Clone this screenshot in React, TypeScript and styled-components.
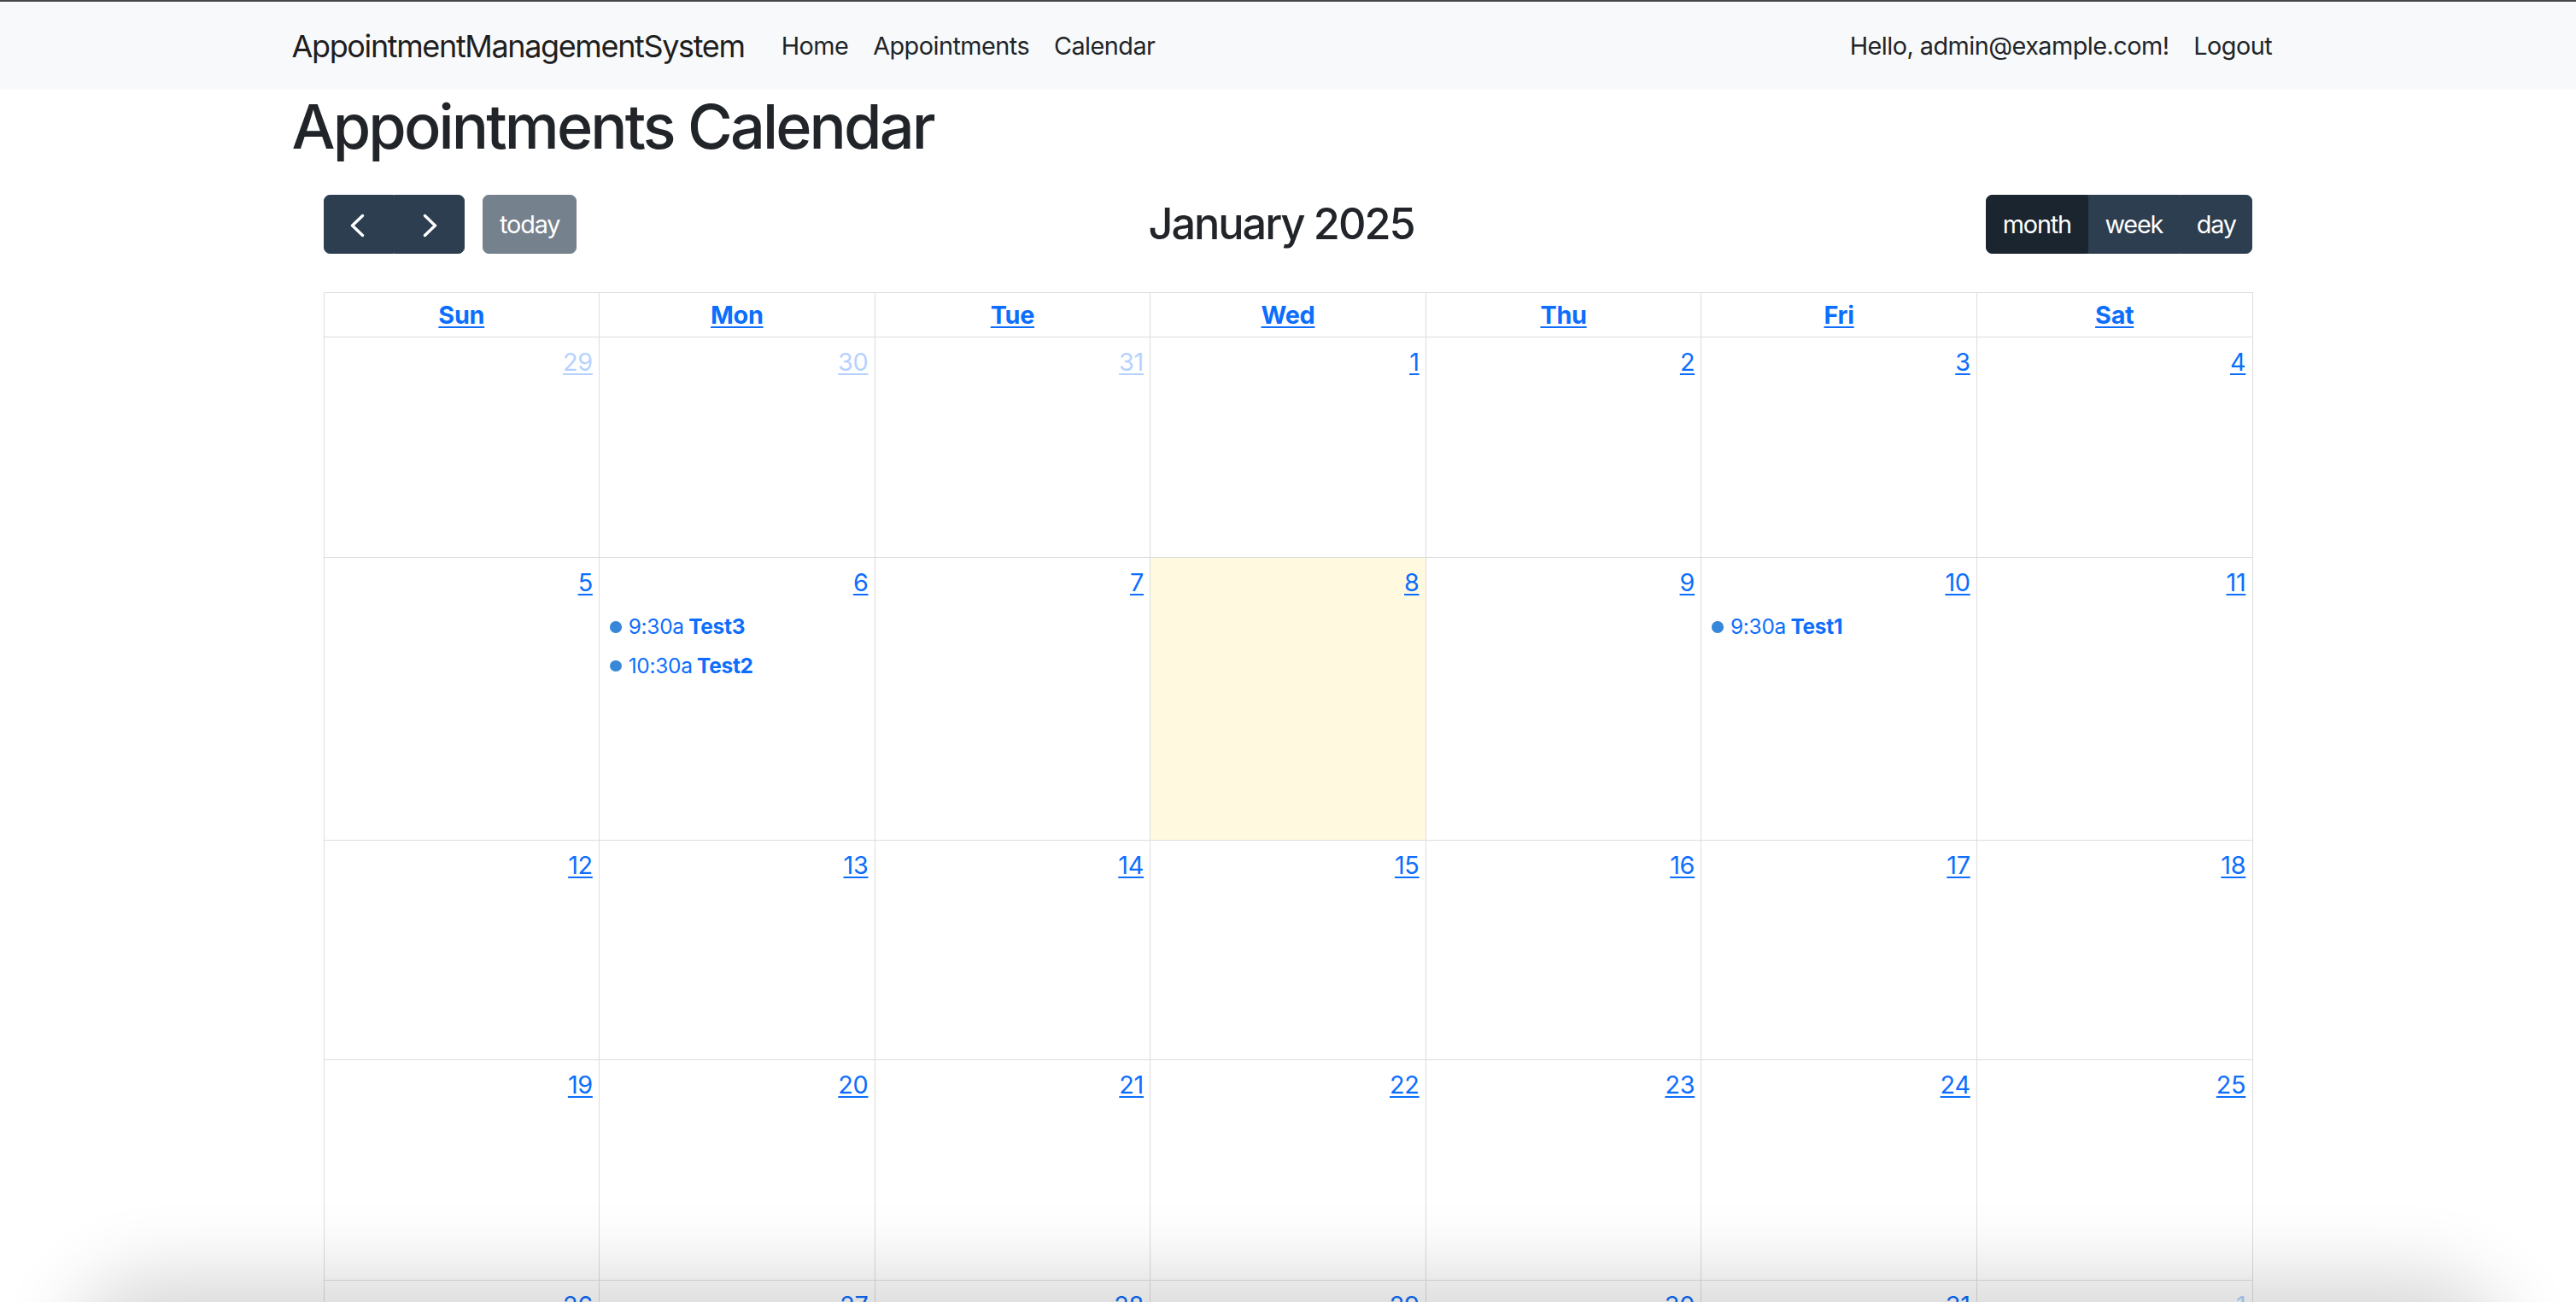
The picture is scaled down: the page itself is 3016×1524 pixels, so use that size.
import React from "react";
import styled, { createGlobalStyle } from "styled-components";

const GlobalStyle = createGlobalStyle`
  html, body { margin: 0; padding: 0; background: #fff; }
  body {
    font-family: Inter, "Noto Sans", "Liberation Sans", sans-serif;
    font-size: 28.8px;
    line-height: 1.5;
    color: #212529;
    letter-spacing: -0.01em;
  }
  * { box-sizing: border-box; }
`;

const WindowEdge = styled.div`
  height: 2px;
  background: #464646;
`;

const NavBar = styled.nav`
  background: #f8f9fa;
  padding: 15.5px 0;
`;

const Container = styled.div`
  width: 2333px;
  margin: 0 auto;
`;

const NavInner = styled(Container)`
  display: flex;
  align-items: center;
`;

const Brand = styled.a`
  font-size: 36px;
  line-height: 1.5;
  letter-spacing: -0.038em;
  padding: 9px 0;
  margin-right: 28.8px;
  color: rgba(0, 0, 0, 0.9);
  text-decoration: none;
`;

const NavList = styled.div<{ $end?: boolean }>`
  display: flex;
  align-items: center;
  margin-left: ${(p) => (p.$end ? "auto" : "0")};
`;

const NavLink = styled.a`
  padding: 14.4px;
  font-size: 28.8px;
  line-height: 1.5;
  letter-spacing: -0.018em;
  color: #212529;
  text-decoration: none;
`;

const Title = styled.h1`
  font-size: 72px;
  font-weight: 500;
  line-height: 1.2;
  letter-spacing: -0.04em;
  margin: 0 0 14.4px;
  color: #212529;
`;

const CalendarWrap = styled.div`
  padding: 22px 37px;
`;

const Toolbar = styled.div`
  display: flex;
  justify-content: space-between;
  align-items: center;
  margin-bottom: 45px;
`;

const Chunk = styled.div`
  display: flex;
  align-items: center;
`;

const ButtonGroup = styled.div`
  display: inline-flex;
  & > button { border-radius: 0; }
  & > button:first-child { border-radius: 7.2px 0 0 7.2px; }
  & > button:last-child { border-radius: 0 7.2px 7.2px 0; }
`;

const FcButton = styled.button<{ $active?: boolean; $disabled?: boolean; $gap?: boolean }>`
  display: inline-flex;
  align-items: center;
  justify-content: center;
  font-family: inherit;
  font-size: 28.8px;
  line-height: 1.5;
  letter-spacing: -0.04em;
  padding: 12.1px 18.72px;
  color: #fff;
  background: ${(p) => (p.$active ? "#1a252f" : "#2c3e50")};
  border: 1.8px solid ${(p) => (p.$active ? "#1a252f" : "#2c3e50")};
  border-radius: 7.2px;
  opacity: ${(p) => (p.$disabled ? 0.65 : 1)};
  margin-left: ${(p) => (p.$gap ? "21.6px" : "0")};
  cursor: pointer;
`;

const ToolbarTitle = styled.h2`
  margin: 0;
  font-size: 50.4px;
  font-weight: 500;
  line-height: 1.2;
  letter-spacing: -0.04em;
  color: #212529;
`;

const Grid = styled.div`
  display: grid;
  grid-template-columns: repeat(7, 1fr);
  border-top: 1.8px solid #ddd;
  border-left: 1.8px solid #ddd;
`;

const HeadCell = styled.div`
  border-right: 1.8px solid #ddd;
  border-bottom: 1.8px solid #ddd;
  padding: 3.6px;
  text-align: center;
  font-weight: 700;
`;

const LinkText = styled.a`
  color: #0d6efd;
  text-decoration: underline;
  text-underline-offset: 3px;
`;

const DayCell = styled.div<{ $h: number; $today?: boolean }>`
  height: ${(p) => p.$h}px;
  border-right: 1.8px solid #ddd;
  border-bottom: 1.8px solid #ddd;
  background: ${(p) => (p.$today ? "rgba(255, 220, 40, 0.15)" : "transparent")};
  display: flex;
  flex-direction: column;
`;

const DayTop = styled.div<{ $other?: boolean }>`
  display: flex;
  justify-content: flex-end;
  opacity: ${(p) => (p.$other ? 0.3 : 1)};
`;

const DayNumber = styled(LinkText)`
  padding: 7.2px;
  line-height: 1.5;
`;

const Events = styled.div`
  margin: 0 3.6px;
`;

const EventRow = styled.a`
  display: flex;
  align-items: center;
  margin-top: 1.8px;
  padding: 3.6px 0;
  font-size: 24.48px;
  line-height: 1.5;
  color: #0d6efd;
  text-decoration: none;
  white-space: nowrap;
`;

const EventDot = styled.span`
  width: 13.5px;
  height: 13.5px;
  border-radius: 50%;
  background: #3788d8;
  margin: 0 8px 0 8.5px;
  flex: none;
`;

const EventTime = styled.span`
  margin-right: 5.4px;
`;

const EventTitle = styled.span`
  font-weight: 700;
`;

const BottomShadow = styled.div`
  position: fixed;
  left: 110px;
  right: 110px;
  bottom: -140px;
  height: 140px;
  border-radius: 70px;
  background: rgba(0, 0, 0, 0.2);
  box-shadow: 0 0 90px 30px rgba(0, 0, 0, 0.16);
  pointer-events: none;
`;

const Chevron = ({ dir }: { dir: "left" | "right" }) => (
  <svg width="43.2" height="43.2" viewBox="0 0 43.2 43.2" aria-hidden>
    <polyline
      points={dir === "left" ? "26.5,11.5 14.5,23 26.5,34.5" : "16.5,11.5 28.5,23 16.5,34.5"}
      fill="none"
      stroke="#fff"
      strokeWidth="3.4"
      strokeLinecap="round"
      strokeLinejoin="round"
    />
  </svg>
);

type Ev = { time: string; title: string };
type Day = { n: number; other?: boolean; today?: boolean; events?: Ev[] };

const weeks: { h: number; days: Day[] }[] = [
  { h: 258, days: [{ n: 29, other: true }, { n: 30, other: true }, { n: 31, other: true }, { n: 1 }, { n: 2 }, { n: 3 }, { n: 4 }] },
  {
    h: 331,
    days: [
      { n: 5 },
      { n: 6, events: [{ time: "9:30a", title: "Test3" }, { time: "10:30a", title: "Test2" }] },
      { n: 7 },
      { n: 8, today: true },
      { n: 9 },
      { n: 10, events: [{ time: "9:30a", title: "Test1" }] },
      { n: 11 },
    ],
  },
  { h: 257, days: [12, 13, 14, 15, 16, 17, 18].map((n) => ({ n })) },
  { h: 258, days: [19, 20, 21, 22, 23, 24, 25].map((n) => ({ n })) },
  { h: 258, days: [{ n: 26 }, { n: 27 }, { n: 28 }, { n: 29 }, { n: 30 }, { n: 31 }, { n: 1, other: true }] },
];

const dayNames = ["Sun", "Mon", "Tue", "Wed", "Thu", "Fri", "Sat"];

export default function App() {
  return (
    <>
      <GlobalStyle />
      <WindowEdge />
      <NavBar>
        <NavInner>
          <Brand href="#">AppointmentManagementSystem</Brand>
          <NavList>
            <NavLink href="#">Home</NavLink>
            <NavLink href="#">Appointments</NavLink>
            <NavLink href="#">Calendar</NavLink>
          </NavList>
          <NavList $end>
            <NavLink href="#">Hello, admin@example.com!</NavLink>
            <NavLink href="#">Logout</NavLink>
          </NavList>
        </NavInner>
      </NavBar>
      <Container>
        <Title>Appointments Calendar</Title>
        <CalendarWrap>
          <Toolbar>
            <Chunk>
              <ButtonGroup>
                <FcButton aria-label="prev">
                  <Chevron dir="left" />
                </FcButton>
                <FcButton aria-label="next">
                  <Chevron dir="right" />
                </FcButton>
              </ButtonGroup>
              <FcButton $disabled $gap>
                today
              </FcButton>
            </Chunk>
            <Chunk>
              <ToolbarTitle>January 2025</ToolbarTitle>
            </Chunk>
            <Chunk>
              <ButtonGroup>
                <FcButton $active>month</FcButton>
                <FcButton>week</FcButton>
                <FcButton>day</FcButton>
              </ButtonGroup>
            </Chunk>
          </Toolbar>
          <Grid>
            {dayNames.map((d) => (
              <HeadCell key={d}>
                <LinkText href="#">{d}</LinkText>
              </HeadCell>
            ))}
            {weeks.map((w, wi) =>
              w.days.map((d, di) => (
                <DayCell key={`${wi}-${di}`} $h={w.h} $today={d.today}>
                  <DayTop $other={d.other}>
                    <DayNumber href="#">{d.n}</DayNumber>
                  </DayTop>
                  {d.events && (
                    <Events>
                      {d.events.map((e) => (
                        <EventRow href="#" key={e.title}>
                          <EventDot />
                          <EventTime>{e.time}</EventTime>
                          <EventTitle>{e.title}</EventTitle>
                        </EventRow>
                      ))}
                    </Events>
                  )}
                </DayCell>
              ))
            )}
          </Grid>
        </CalendarWrap>
      </Container>
      <BottomShadow />
    </>
  );
}
